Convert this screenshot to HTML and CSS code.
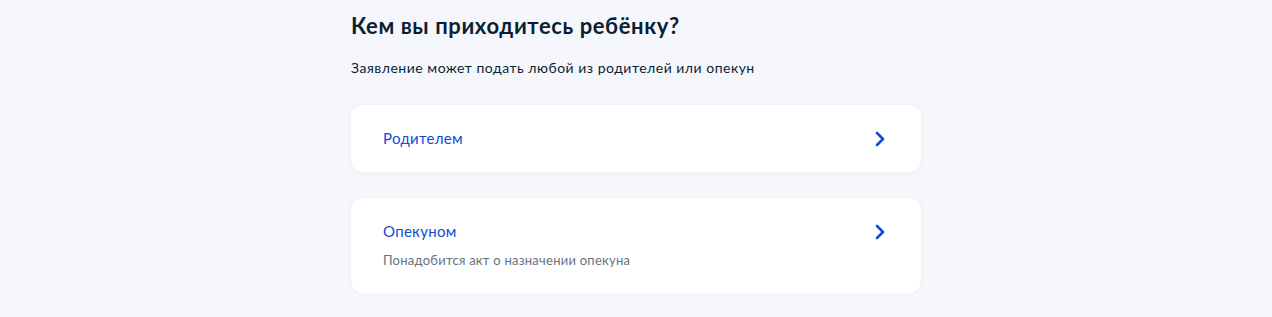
FILE: index.html
```html
<!DOCTYPE html>
<html lang="ru">
<head>
<meta charset="utf-8">
<title>Кем вы приходитесь ребёнку?</title>
<link rel="stylesheet" href="styles.css">
</head>
<body>
<main class="page">
  <h1 class="title">Кем вы приходитесь ребёнку?</h1>
  <p class="lead">Заявление может подать любой из родителей или опекун</p>
  <div class="options">
    <a class="option" href="#">
      <div class="option-body">
        <div class="option-title">Родителем</div>
      </div>
      <svg class="chevron" viewBox="0 0 24 24" width="24" height="24" aria-hidden="true"><path d="M10 6l6 6-6 6" fill="none" stroke="#0d4cd3" stroke-width="2.6" stroke-linecap="round" stroke-linejoin="round"/></svg>
    </a>
    <a class="option" href="#">
      <div class="option-body">
        <div class="option-title">Опекуном</div>
        <div class="option-hint">Понадобится акт о назначении опекуна</div>
      </div>
      <svg class="chevron" viewBox="0 0 24 24" width="24" height="24" aria-hidden="true"><path d="M10 6l6 6-6 6" fill="none" stroke="#0d4cd3" stroke-width="2.6" stroke-linecap="round" stroke-linejoin="round"/></svg>
    </a>
  </div>
</main>
</body>
</html>
```
FILE: styles.css
```css
html, body {
  margin: 0;
  padding: 0;
  background: #f5f7fc;
}
body {
  font-family: Lato, "Noto Sans", sans-serif;
  color: #0b1f33;
}
.page {
  width: 570px;
  margin: 0 auto;
  padding-top: 12px;
}
.title {
  margin: 0;
  font-size: 22px;
  line-height: 28px;
  letter-spacing: 0.6px;
  font-weight: 700;
  color: #0b1f33;
}
.lead {
  margin: 18px 0 0;
  font-size: 14px;
  line-height: 20px;
  letter-spacing: 0.5px;
  color: #0b1f33;
}
.options {
  margin-top: 27px;
  display: flex;
  flex-direction: column;
  gap: 26px;
}
.option {
  display: flex;
  align-items: flex-start;
  justify-content: space-between;
  background: #fff;
  border-radius: 12px;
  box-shadow: 0 1px 6px rgba(11, 31, 51, 0.06);
  padding: 23px 30px 24px 32px;
  text-decoration: none;
}
.option-body {
  display: flex;
  flex-direction: column;
  gap: 10px;
}
.option-title {
  font-size: 15px;
  line-height: 20px;
  letter-spacing: 0.3px;
  color: #0d4cd3;
}
.option-hint {
  font-size: 13px;
  line-height: 18px;
  letter-spacing: 0.25px;
  color: #66727f;
}
.chevron {
  flex: none;
  margin: -1px 0 -5px;
}
```
